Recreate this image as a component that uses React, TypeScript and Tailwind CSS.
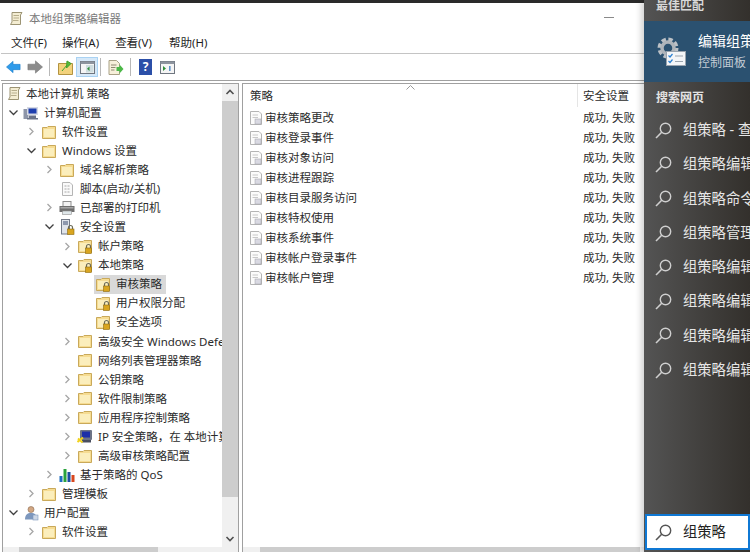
import { ReactNode } from 'react'

const FONT = "font-['Noto_Sans','Noto_Sans_CJK_SC',sans-serif]"

function Folder({ lock }: { lock?: boolean }) {
  return (
    <svg width="16" height="16" viewBox="0 0 16 16" className="shrink-0">
      <path d="M1.5 3.5V14.5H14.5V2.5H7L6 3.5Z" fill="#f6dc92" stroke="#c9a95a" />
      <path d="M3 5H13V13H3Z" fill="#fbeebc" />
      {lock && (
        <>
          <path d="M9.5 10V8.5a2 2 0 0 1 4 0V10" fill="none" stroke="#6b6b5a" strokeWidth="1.2" />
          <rect x="8.5" y="10" width="6" height="5.5" fill="#d9a520" stroke="#8e6b10" strokeWidth="0.6" />
        </>
      )}
    </svg>
  )
}

function Scroll({ size = 16 }: { size?: number }) {
  return (
    <svg width={size} height={size} viewBox="0 0 16 16" className="shrink-0">
      <path d="M4 1.5H14L12.5 4V13.5H2.5L4 11Z" fill="#f4edd2" stroke="#9c9474" />
      <path d="M5.5 4.5H11M5.5 7H11M5 9.5H10.5" stroke="#b7ae8c" />
    </svg>
  )
}

function Computer() {
  return (
    <svg width="16" height="16" viewBox="0 0 16 16" className="shrink-0">
      <rect x="0.5" y="4" width="5" height="10" fill="#8d95a8" />
      <rect x="4" y="2" width="11" height="8" fill="#d5d9e4" />
      <rect x="5.5" y="3.5" width="8" height="5" fill="#1e3fae" />
      <path d="M6 10.5H13V13H15V14.5H4V13H6Z" fill="#6a7388" />
    </svg>
  )
}

function Script() {
  return (
    <svg width="16" height="16" viewBox="0 0 16 16" className="shrink-0">
      <path d="M3.5 1.5H11L13.5 4V14.5H3.5Z" fill="#fafafa" stroke="#b5b5b5" />
      <path d="M5.5 5H11M5.5 8H11M5.5 11H11" stroke="#a9a9a9" strokeDasharray="2 1" />
    </svg>
  )
}

function Printer() {
  return (
    <svg width="16" height="16" viewBox="0 0 16 16" className="shrink-0">
      <rect x="4" y="1.5" width="8" height="5" fill="#f3f3f3" stroke="#8f8f8f" />
      <rect x="0.5" y="6" width="15" height="6" fill="#6f6f6f" />
      <rect x="1.5" y="7" width="13" height="1.5" fill="#a7a7a7" />
      <rect x="3.5" y="11" width="9" height="3.5" fill="#dfe7ea" stroke="#8f8f8f" strokeWidth="0.6" />
    </svg>
  )
}

function SecurityDoc() {
  return (
    <svg width="16" height="16" viewBox="0 0 16 16" className="shrink-0">
      <rect x="2.5" y="0.5" width="8" height="14.5" fill="#dfe3ea" stroke="#737a88" />
      <path d="M4 3H9M4 5H9" stroke="#3d4d70" />
      <path d="M9.5 10V8.5a2 2 0 0 1 4 0V10" fill="none" stroke="#6b6b5a" strokeWidth="1.2" />
      <rect x="8.5" y="10" width="6.5" height="5.5" fill="#d9a520" stroke="#8e6b10" strokeWidth="0.6" />
    </svg>
  )
}

function IpSec() {
  return (
    <svg width="16" height="16" viewBox="0 0 16 16" className="shrink-0">
      <rect x="3" y="1" width="12" height="10" rx="1" fill="#6c7386" />
      <rect x="5" y="2.5" width="8" height="6" fill="#1c2fa8" />
      <rect x="5" y="11" width="9" height="2.5" fill="#4a4f60" />
      <path d="M0.5 13L6 8.5M1 9.5L5.5 13.5" stroke="#f1d21c" strokeWidth="2" />
    </svg>
  )
}

function QosBars() {
  return (
    <svg width="16" height="16" viewBox="0 0 16 16" className="shrink-0">
      <rect x="0.5" y="9" width="3" height="6" fill="#1f6fc0" />
      <rect x="4.5" y="2" width="3" height="13" fill="#2aa33c" />
      <rect x="8.5" y="5" width="3" height="10" fill="#1c4fa0" />
      <rect x="12.5" y="8" width="3" height="7" fill="#d8471f" />
    </svg>
  )
}

function User() {
  return (
    <svg width="16" height="16" viewBox="0 0 16 16" className="shrink-0">
      <circle cx="8" cy="4.5" r="3" fill="#d2a783" stroke="#8a6a4f" strokeWidth="0.6" />
      <path d="M2 14.5C2 9.5 4.5 8 8 8s6 1.5 6 6.5Z" fill="#7d97bd" />
      <rect x="10" y="10" width="5" height="5" fill="#cdd7e6" stroke="#7d97bd" strokeWidth="0.6" />
    </svg>
  )
}

function Chevron({ dir }: { dir: 'r' | 'd' | 'n' }) {
  if (dir === 'n') return <span className="w-[9px] shrink-0" />
  return (
    <svg width="9" height="9" viewBox="0 0 9 9" className="shrink-0">
      {dir === 'r' ? (
        <path d="M2.5 1L6 4.5L2.5 8" fill="none" stroke="#a6a6a6" strokeWidth="1.3" />
      ) : (
        <path d="M0.5 2.5L4.5 6.5L8.5 2.5" fill="none" stroke="#404040" strokeWidth="1.3" />
      )}
    </svg>
  )
}

type TreeItem = { label: string; depth: number; dir: 'r' | 'd' | 'n'; icon: ReactNode; selected?: boolean }

const TREE: TreeItem[] = [
  { label: '计算机配置', depth: 0, dir: 'd', icon: <Computer /> },
  { label: '软件设置', depth: 1, dir: 'r', icon: <Folder /> },
  { label: 'Windows 设置', depth: 1, dir: 'd', icon: <Folder /> },
  { label: '域名解析策略', depth: 2, dir: 'r', icon: <Folder /> },
  { label: '脚本(启动/关机)', depth: 2, dir: 'n', icon: <Script /> },
  { label: '已部署的打印机', depth: 2, dir: 'r', icon: <Printer /> },
  { label: '安全设置', depth: 2, dir: 'd', icon: <SecurityDoc /> },
  { label: '帐户策略', depth: 3, dir: 'r', icon: <Folder lock /> },
  { label: '本地策略', depth: 3, dir: 'd', icon: <Folder lock /> },
  { label: '审核策略', depth: 4, dir: 'n', icon: <Folder lock />, selected: true },
  { label: '用户权限分配', depth: 4, dir: 'n', icon: <Folder lock /> },
  { label: '安全选项', depth: 4, dir: 'n', icon: <Folder lock /> },
  { label: '高级安全 Windows Defender 防火墙', depth: 3, dir: 'r', icon: <Folder /> },
  { label: '网络列表管理器策略', depth: 3, dir: 'n', icon: <Folder /> },
  { label: '公钥策略', depth: 3, dir: 'r', icon: <Folder /> },
  { label: '软件限制策略', depth: 3, dir: 'r', icon: <Folder /> },
  { label: '应用程序控制策略', depth: 3, dir: 'r', icon: <Folder /> },
  { label: 'IP 安全策略，在 本地计算机', depth: 3, dir: 'r', icon: <IpSec /> },
  { label: '高级审核策略配置', depth: 3, dir: 'r', icon: <Folder /> },
  { label: '基于策略的 QoS', depth: 2, dir: 'r', icon: <QosBars /> },
  { label: '管理模板', depth: 1, dir: 'r', icon: <Folder /> },
  { label: '用户配置', depth: 0, dir: 'd', icon: <User /> },
  { label: '软件设置', depth: 1, dir: 'r', icon: <Folder /> },
]

const DEPTH_PAD = ['pl-[6px]', 'pl-[24px]', 'pl-[42px]', 'pl-[60px]', 'pl-[91px]']

const POLICIES = [
  '审核策略更改',
  '审核登录事件',
  '审核对象访问',
  '审核进程跟踪',
  '审核目录服务访问',
  '审核特权使用',
  '审核系统事件',
  '审核帐户登录事件',
  '审核帐户管理',
]

const WEB_RESULTS = [
  '组策略 - 查看',
  '组策略编辑器',
  '组策略命令行',
  '组策略管理器',
  '组策略编辑器',
  '组策略编辑器',
  '组策略编辑器',
  '组策略编辑器',
]

function SearchGlass() {
  return (
    <svg width="17" height="17" viewBox="0 0 17 17" className="shrink-0">
      <circle cx="10.5" cy="6.5" r="5.2" fill="none" stroke="currentColor" strokeWidth="1.4" />
      <path d="M6.7 10.3L1 16" stroke="currentColor" strokeWidth="1.6" />
    </svg>
  )
}

function PolicyDoc() {
  return (
    <svg width="12" height="14" viewBox="0 0 12 14" className="shrink-0">
      <path d="M0.5 0.5H9L11.5 3V13.5H0.5Z" fill="#fbfbfb" stroke="#b4b4b4" />
      <path d="M2.5 4H8M2.5 6.5H8" stroke="#c8c8c8" />
      <rect x="5" y="8" width="6" height="5" fill="#d9d9e2" stroke="#a0a0a8" strokeWidth="0.5" />
    </svg>
  )
}

function Toolbar() {
  return (
    <div className="flex h-[27px] shrink-0 items-center border-b border-[#a0a0a0] pl-[5px]">
      <svg width="15" height="14" viewBox="0 0 17 14" className="shrink-0">
        <path d="M8 0.5V4H16V10H8V13.5L0.5 7Z" fill="#2f9bea" stroke="#1677c4" strokeWidth="0.6" />
      </svg>
      <svg width="16" height="14" viewBox="0 0 17 14" className="ml-[6px] shrink-0">
        <path d="M9 0.5V4H1V10H9V13.5L16.5 7Z" fill="#8c8c8c" stroke="#6e6e6e" strokeWidth="0.6" />
      </svg>
      <span className="ml-[6px] h-[18px] w-px bg-[#b8b8b8]" />
      <svg width="15" height="15" viewBox="0 0 15 15" className="ml-[8px] shrink-0">
        <path d="M0.5 3.5H14.5V14.5H0.5Z" fill="#f2d27c" stroke="#b39340" />
        <path d="M4 11L9 5M9 1L13 3.5L8.5 8Z" stroke="#3fa12d" fill="#56b93a" strokeWidth="1" />
      </svg>
      <span className="ml-[3px] flex h-[20px] w-[22px] items-center justify-center border border-[#a9d2f3] bg-[#d5e8f8]">
        <svg width="15" height="13" viewBox="0 0 15 13">
          <rect x="0.5" y="0.5" width="14" height="12" fill="#f5f5f5" stroke="#6f7680" />
          <rect x="0.5" y="0.5" width="14" height="2.5" fill="#8d949e" />
          <rect x="6" y="4" width="7.5" height="7.5" fill="#cfdde0" />
          <path d="M9.5 5.5V10L7 7.7Z" fill="#2f8f3a" />
        </svg>
      </span>
      <span className="ml-[2px] h-[18px] w-px bg-[#b8b8b8]" />
      <svg width="16" height="15" viewBox="0 0 15 15" className="ml-[7px] shrink-0">
        <path d="M0.5 0.5H8L11 3.5V14.5H0.5Z" fill="#f7f0da" stroke="#a9a186" />
        <path d="M2.5 5H8M2.5 7.5H7M2.5 10H6" stroke="#8f8870" />
        <path d="M8 7H11V4.5L15 9L11 13.5V11H8Z" fill="#4cb848" />
      </svg>
      <span className="ml-[6px] h-[18px] w-px bg-[#b8b8b8]" />
      <span className={`ml-[8px] flex h-[16px] w-[13px] items-center justify-center bg-[#2b4fa8] text-[12px] font-bold leading-none text-white ${FONT}`}>
        ?
      </span>
      <svg width="15" height="13" viewBox="0 0 15 13" className="ml-[8px] shrink-0">
        <rect x="0.5" y="0.5" width="14" height="12" fill="#f5f5f5" stroke="#6f7680" />
        <rect x="0.5" y="0.5" width="14" height="2.5" fill="#8d949e" />
        <path d="M3 5V10L6 7.5Z" fill="#2f8f3a" />
        <rect x="9" y="5" width="1.6" height="5" fill="#5f93c9" />
      </svg>
    </div>
  )
}

function TreePane() {
  return (
    <div className="flex h-full w-[237px] shrink-0 flex-col overflow-hidden border-t border-r border-l border-[#a0a0a0]">
      <div className="flex min-h-0 flex-1">
        <div className="min-w-0 flex-1 overflow-hidden pt-px">
          <div className="flex h-[18.2px] items-center gap-[4px] pl-[3px]">
            <Scroll />
            <span className="whitespace-nowrap">本地计算机 策略</span>
          </div>
          {TREE.map((item, i) => (
            <div key={i} className={`flex h-[19.05px] items-center whitespace-nowrap ${DEPTH_PAD[item.depth]}`}>
              {item.depth < 4 && <Chevron dir={item.dir} />}
              <span
                className={`flex h-[19px] items-center gap-[3px] pr-[4px] ${item.depth < 4 ? 'ml-[5px]' : 'pl-px'} ${item.selected ? 'bg-[#d9d9d9]' : ''}`}
              >
                {item.icon}
                <span className="ml-[2px]">{item.label}</span>
              </span>
            </div>
          ))}
        </div>
        <div className="flex w-[16px] shrink-0 flex-col items-center bg-[#f0f0f0]">
          <svg width="16" height="17" viewBox="0 0 16 17" className="shrink-0">
            <path d="M4.5 10L8 6.5L11.5 10" fill="none" stroke="#505050" strokeWidth="1.6" />
          </svg>
          <div className="h-[396px] w-full bg-[#cdcdcd]" />
          <div className="flex-1" />
          <svg width="16" height="17" viewBox="0 0 16 17" className="shrink-0">
            <path d="M4.5 7L8 10.5L11.5 7" fill="none" stroke="#505050" strokeWidth="1.6" />
          </svg>
        </div>
      </div>
      <div className="flex h-[5px] shrink-0 bg-[#f0f0f0]">
        <div className="ml-[16px] h-full w-[139px] bg-[#cdcdcd]" />
      </div>
    </div>
  )
}

function ListPane() {
  return (
    <div className="ml-[3px] flex h-full min-w-0 flex-1 flex-col overflow-hidden border-t border-l border-[#a0a0a0]">
      <div className="relative flex h-[23px] shrink-0 items-center">
        <svg width="9" height="5" viewBox="0 0 9 5" className="absolute left-[163px] top-[1px]">
          <path d="M0.5 4.5L4.5 0.5L8.5 4.5" fill="none" stroke="#9a9a9a" />
        </svg>
        <span className="w-[334px] shrink-0 pl-[7px]">策略</span>
        <span className="h-full w-px bg-[#e5e5e5]" />
        <span className="pl-[5px] whitespace-nowrap">安全设置</span>
      </div>
      <div className="flex-1 pt-px">
        {POLICIES.map((p) => (
          <div key={p} className="flex h-[20px] items-center whitespace-nowrap">
            <span className="flex w-[335px] shrink-0 items-center gap-[3px] pl-[7px]">
              <PolicyDoc />
              {p}
            </span>
            <span className="pl-[5px]">成功, 失败</span>
          </div>
        ))}
      </div>
      <div className="flex h-[5px] shrink-0 bg-[#f0f0f0]">
        <div className="ml-[17px] h-full w-[380px] bg-[#cdcdcd]" />
      </div>
    </div>
  )
}

function SearchPanel() {
  return (
    <div className="flex h-full w-[106px] shrink-0 flex-col overflow-hidden whitespace-nowrap bg-gradient-to-r from-[#545454] to-[#33302c] text-[#e8e8e8] shadow-[-3px_0_6px_rgba(0,0,0,0.18)]">
      <div className="flex h-[21px] shrink-0 items-start pl-[12px] text-[12px] font-bold leading-[12px] text-[#d8d8d8]">
        最佳匹配
      </div>
      <div className="flex h-[61px] shrink-0 items-center bg-[#2b5170] pl-[13px]">
        <svg width="30" height="30" viewBox="0 0 30 30" className="shrink-0">
          <circle cx="11" cy="11" r="8" fill="none" stroke="#bcc1c6" strokeWidth="5" strokeDasharray="4 2.3" />
          <circle cx="11" cy="11" r="6" fill="none" stroke="#aeb4ba" strokeWidth="3.5" />
          <rect x="9.5" y="14.5" width="19" height="14" fill="#f4f6f8" stroke="#9aa4ae" />
          <path d="M11.5 18.5L13 20L15.5 17M11.5 24L13 25.5L15.5 22.5" fill="none" stroke="#2a7fd0" strokeWidth="1.2" />
          <path d="M18 19H26M18 24.5H26" stroke="#9aa4ae" />
        </svg>
        <div className="ml-[11px] flex flex-col">
          <span className="text-[14px] leading-[22px] text-white">编辑组策略</span>
          <span className="text-[12px] leading-[22px] text-[#c3ccd4]">控制面板</span>
        </div>
      </div>
      <div className="flex h-[30px] shrink-0 items-center pt-[2px] pl-[12px] text-[12px] font-bold text-[#e2e2e2]">搜索网页</div>
      <div className="flex flex-col pt-[1px]">
        {WEB_RESULTS.map((r, i) => (
          <div key={i} className="flex h-[34.3px] items-center pl-[11px] text-[#cfcfcf]">
            <SearchGlass />
            <span className="ml-[11px] text-[14.3px] text-[#e6e6e6]">{r}</span>
          </div>
        ))}
      </div>
      <div className="flex-1" />
      <div className="mb-[2px] ml-[1px] flex h-[36px] shrink-0 items-center border-2 border-[#0f78d4] bg-white pl-[8px] text-[#555555]">
        <SearchGlass />
        <span className="ml-[11px] text-[14.3px] text-[#222222]">组策略</span>
      </div>
    </div>
  )
}

export default function App() {
  return (
    <div className={`flex h-[552px] w-[750px] overflow-hidden bg-[#2a2a2a] text-[11.5px] leading-none text-[#2b2b2b] ${FONT}`}>
      <div className="mt-[3px] flex min-w-0 flex-1 flex-col overflow-hidden bg-white pl-px">
        {/* Title bar */}
        <div className="relative flex h-[29px] shrink-0 items-center pt-[2px] pl-[7px] text-[#7a7a7a]">
          <Scroll />
          <span className="ml-[5px]">本地组策略编辑器</span>
          <span className="absolute left-[603px] top-[14px] h-px w-[10px] bg-[#8a8a8a]" />
        </div>
        {/* Menu bar */}
        <div className="flex h-[22px] shrink-0 items-center gap-[15px] border-b border-[#c4c4c4] pl-[10px] text-[#1f1f1f]">
          <span>文件(F)</span>
          <span>操作(A)</span>
          <span className="ml-px">查看(V)</span>
          <span className="ml-[2px]">帮助(H)</span>
        </div>
        <Toolbar />
        <div className="flex min-h-0 flex-1 pt-[2px] pl-px">
          <TreePane />
          <ListPane />
        </div>
      </div>
      <SearchPanel />
    </div>
  )
}
